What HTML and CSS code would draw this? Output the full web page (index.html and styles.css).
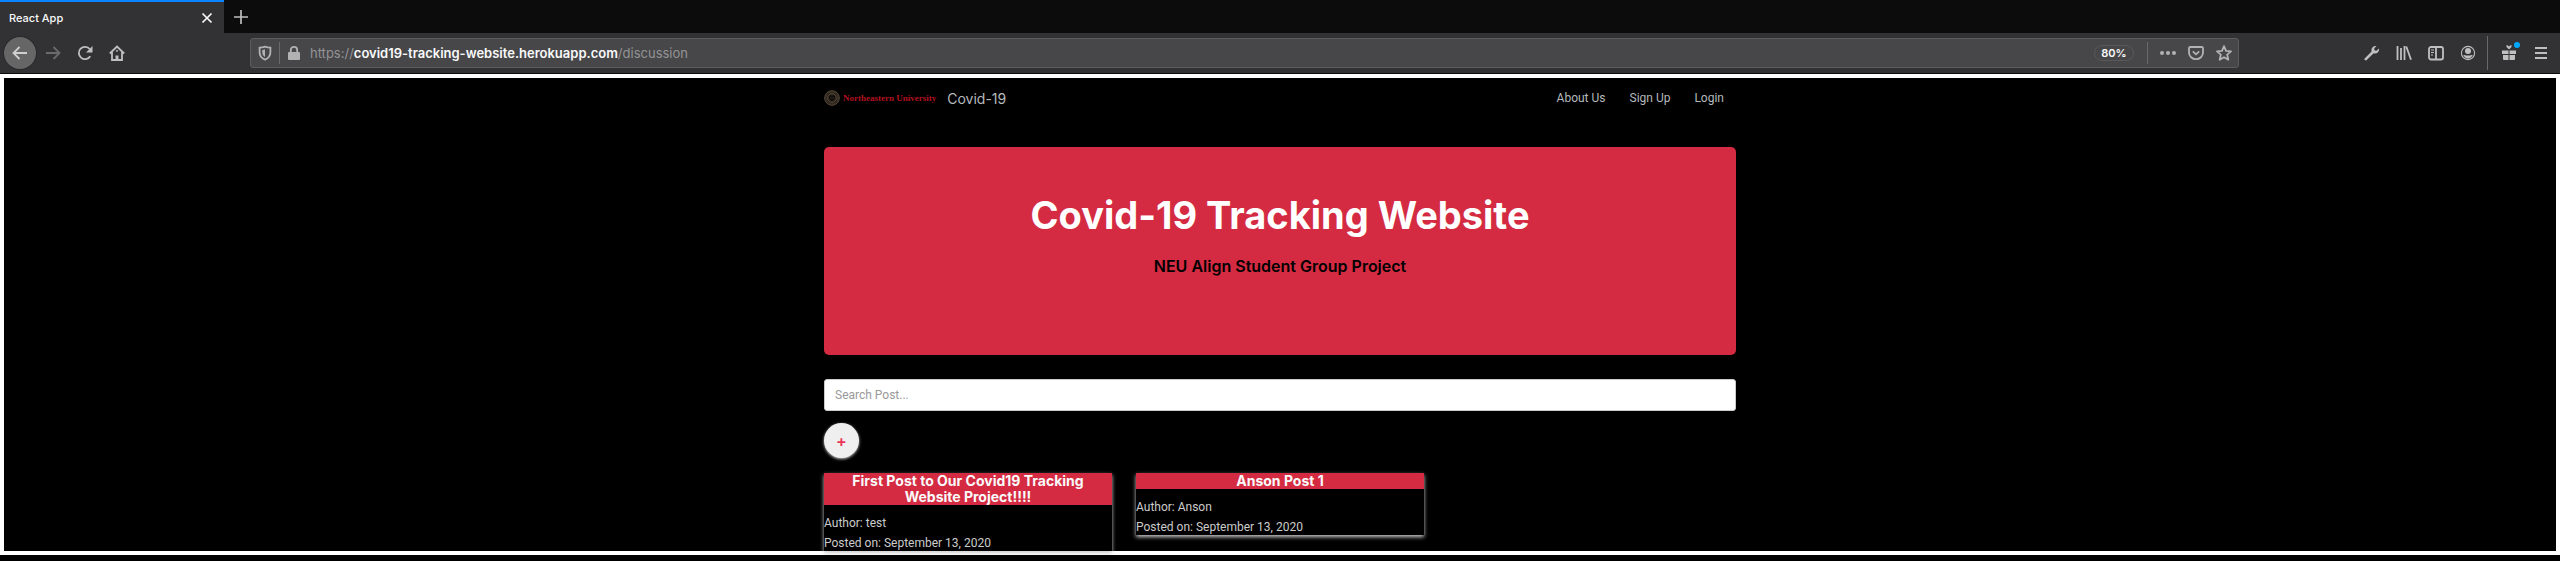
FILE: index.html
```html
<!DOCTYPE html>
<html lang="en">
<head>
<meta charset="utf-8">
<title>React App</title>
<link rel="stylesheet" href="styles.css">
</head>
<body>
<header class="browser">
  <div class="tabs">
    <div class="tab">
      <span class="tab-title">React App</span>
      <button class="tab-close" aria-label="Close tab"><svg width="12" height="12" viewBox="0 0 12 12"><path d="M1.500 1.500l9 9M10.500 1.500l-9 9" fill="none" stroke="currentColor" stroke-width="1.700"/></svg></button>
    </div>
    <button class="tab-new" aria-label="New tab"><svg width="16" height="16" viewBox="0 0 16 16"><path d="M8 1v14M1 8h14" fill="none" stroke="currentColor" stroke-width="1.700"/></svg></button>
  </div>
  <div class="toolbar">
    <button class="tool tool-back" aria-label="Back"><svg class="icon" viewBox="0 0 16 16"><path d="M15 8H1.500M7.500 2L1.500 8l6 6" class="line"/></svg></button>
    <button class="tool tool-off" aria-label="Forward" disabled><svg class="icon" viewBox="0 0 16 16"><path d="M1 8h13.500M8.500 2l6 6-6 6" class="line"/></svg></button>
    <button class="tool" aria-label="Reload"><svg class="icon" viewBox="0 0 16 16"><path d="M13.300 11.300A6.200 6.200 0 1 1 12.800 4" class="line"/><path d="M15.500 1v6.500H9z" fill="currentColor"/></svg></button>
    <button class="tool" aria-label="Home"><svg class="icon" viewBox="0 0 16 16"><path d="M.8 8.500L8 1.500l7.200 7M3 7v8h10V7" class="line"/><path d="M6.500 15v-4.500h3V15z" fill="currentColor"/><path d="M7.200 5.800h1.600" class="line"/></svg></button>
    <div class="urlbar">
      <button class="site-button" aria-label="Tracking protection"><svg class="icon" viewBox="0 0 16 16"><path d="M8 1.600c2 .7 3.700 1 5.400 1v4.600c0 3.600-2 6-5.400 7.400-3.400-1.400-5.400-3.800-5.400-7.400V2.600c1.700 0 3.400-.3 5.400-1z" class="line"/><path d="M8 4.300v7.600C6.200 10.800 5.300 9.400 5.300 7.300V4.900C6.300 4.800 7.200 4.600 8 4.300z" fill="currentColor"/></svg></button>
      <span class="rule"></span>
      <button class="site-button" aria-label="Secure connection"><svg class="icon" viewBox="0 0 16 16"><rect x="2" y="7" width="12" height="8" rx="1" fill="currentColor"/><path d="M4.800 8V5a3.200 3.200 0 0 1 6.400 0v3" class="line"/></svg></button>
      <div class="address">https://<span class="domain">covid19-tracking-website.herokuapp.com</span>/discussion</div>
      <button class="zoom-level">80%</button>
      <span class="rule"></span>
      <div class="page-actions">
        <button class="action" aria-label="Page actions"><svg class="icon" viewBox="0 0 16 16" fill="currentColor"><circle cx="2" cy="8" r="2"/><circle cx="8" cy="8" r="2"/><circle cx="14" cy="8" r="2"/></svg></button>
        <button class="action" aria-label="Save to Pocket"><svg class="icon" viewBox="0 0 16 16"><path d="M2.300 2h11.400q1.300 0 1.300 1.300V7.500a7 6.700 0 0 1-14 0V3.300Q1 2 2.300 2z" class="line"/><path d="M4.800 6.300L8 9.300l3.200-3" class="line"/></svg></button>
        <button class="action" aria-label="Bookmark"><svg class="icon" viewBox="0 0 16 16"><path d="M8 1.200l2 4.600 5 .5-3.800 3.400 1.100 5L8 12.200l-4.300 2.500 1.100-5L1 6.300l5-.5z" class="line" stroke-linejoin="round"/></svg></button>
      </div>
    </div>
    <button class="tool" aria-label="Developer tools"><svg class="icon" viewBox="0 0 16 16"><path d="M1.800 14.200L9.500 6.500" fill="none" stroke="currentColor" stroke-width="2.600" stroke-linecap="round"/><path d="M12.500 1A4.200 4.200 0 0 0 7.600 6.200L9.800 8.400A4.200 4.200 0 0 0 15 3.500l-2.500 2.300-2-.3-.3-2z" fill="currentColor"/></svg></button>
    <button class="tool" aria-label="Library"><svg class="icon" viewBox="0 0 16 16"><path d="M1.500 1v14M5 3v12M8.500 1v14M10.300 1.500L15 14.700" class="line"/></svg></button>
    <button class="tool" aria-label="Sidebars"><svg class="icon" viewBox="0 0 16 16"><rect x="1" y="2" width="14" height="12.500" rx="2" class="line"/><path d="M8 2v12" class="line"/><path d="M3 5h3M3 7.500h3M3 10h2" fill="none" stroke="currentColor"/></svg></button>
    <button class="tool" aria-label="Account"><svg class="icon" viewBox="0 0 16 16"><circle cx="8" cy="8" r="6.600" fill="none" stroke="currentColor" stroke-width="1.100"/><circle cx="8" cy="6" r="3" fill="currentColor"/><path d="M3.300 10c1.200 0 2 .5 4.700.5s3.500-.5 4.700-.5c-.7 2-2.500 3.400-4.700 3.400S4 12 3.300 10z" fill="currentColor"/></svg></button>
    <span class="rule rule-tall"></span>
    <button class="tool tool-gift" aria-label="What's new"><svg class="icon" viewBox="0 0 16 16" fill="currentColor"><path d="M1 5.500h6.500V9H1zM8.500 5.500H15V9H8.500zM2 10h5.500v5H3q-1 0-1-1zM8.500 10H14v4q0 1-1 1H8.500z"/><path d="M5.500 0Q7 0 8 1.500 9 0 10.500 0v2L8 4.500 5.500 2z"/></svg><span class="dot"></span></button>
    <button class="tool" aria-label="Menu"><svg class="icon" viewBox="0 0 16 16"><path d="M2 3h12M2 8h12M2 13h12" class="line"/></svg></button>
  </div>
</header>
<div class="frame">
  <div class="container">
    <nav class="navbar">
      <a class="logo" href="#"><svg width="16" height="16" viewBox="0 0 16 16" fill="none" stroke="#5a4c3c"><circle cx="8" cy="8" r="7.300" fill="#241e17"/><circle cx="8" cy="8" r="6" stroke-dasharray="1 1"/><circle cx="8" cy="8" r="4.300"/><path d="M5.500 6h5v2.500L8 10.800 5.500 8.500zM8 6v4" stroke="#0c0a08"/></svg><span class="logo-text">Northeastern University</span></a>
      <a class="brand" href="#">Covid-19</a>
      <div class="links"><a href="#">About Us</a><a href="#">Sign Up</a><a href="#">Login</a></div>
    </nav>
    <main>
      <section class="hero">
        <h1>Covid-19 Tracking Website</h1>
        <p>NEU Align Student Group Project</p>
      </section>
      <input class="search" type="text" placeholder="Search Post..." aria-label="Search Post">
      <button class="add" aria-label="Add post">+</button>
      <div class="posts">
        <article class="post">
          <h2>First Post to Our Covid19 Tracking Website Project!!!!</h2>
          <div class="post-body"><p>Author: test</p><p>Posted on: September 13, 2020</p></div>
        </article>
        <article class="post">
          <h2>Anson Post 1</h2>
          <div class="post-body"><p>Author: Anson</p><p>Posted on: September 13, 2020</p></div>
        </article>
      </div>
    </main>
  </div>
</div>
</body>
</html>
```
FILE: styles.css
```css
* { box-sizing: border-box; }
body { margin: 0; background: #000; font-family: Inter, "Liberation Sans", sans-serif; font-size: 11px; }
h1, h2, p { margin: 0; }
a { color: inherit; text-decoration: none; }
button { font: inherit; color: inherit; background: none; border: 0; padding: 0; display: flex; align-items: center; justify-content: center; }
.icon { width: 16px; height: 16px; display: block; }
.line { fill: none; stroke: currentColor; stroke-width: 1.800; }

.tabs { display: flex; height: 33px; background: #0c0c0d; }
.tab { width: 224px; display: flex; align-items: center; justify-content: space-between; padding: 0 11px 0 9px; border-top: 2px solid #0a84ff; background: #323234; color: #f9f9fa; font-weight: 500; }
.tab-new { width: 34px; color: #bebebe; }
.toolbar { display: flex; align-items: center; height: 41px; padding: 0 3px 0 4px; background: #323234; border-bottom: 1px solid #0c0c0d; color: #bfbfc0; }
.tool { width: 32px; height: 32px; flex: none; position: relative; }
.tool-back { margin-right: 1px; border-radius: 50%; background: #666667; color: #d0d0d0; box-shadow: 0 0 0 1px #29292a; }
.tool-off { color: #6b6b6d; }
.rule { width: 1px; height: 22px; background: #69696b; }
.rule-tall { height: 34px; margin: 0 5px 0 3px; }
.dot { position: absolute; top: 5px; right: 5px; width: 6px; height: 6px; border-radius: 50%; background: #00a8ff; }
.urlbar { flex: 1; display: flex; align-items: center; height: 30px; margin: 0 117px; border: 1px solid #5c5c5e; border-radius: 3px; background: #474749; color: #b2b2b3; }
.site-button { width: 28px; height: 28px; }
.address { flex: 1; padding-left: 2px; color: #949496; font-size: 13px; white-space: nowrap; }
.domain { color: #f9f9fa; font-weight: 600; }
.zoom-level { width: 40px; height: 16px; margin-right: 13px; border: 1px solid #58585a; border-radius: 8px; color: #f9f9fa; font-weight: 600; }
.page-actions { display: flex; padding-left: 6px; }
.action { width: 28px; height: 28px; }

.frame { border: 4px solid #fff; background: #000; font-size: 12px; }
.container { max-width: 912px; margin: 0 auto; }
.navbar { display: flex; align-items: center; height: 40px; color: #b5b9bd; }
.logo { display: flex; align-items: center; gap: 3px; }
.logo-text { color: #b0101f; font-family: "Liberation Serif", serif; font-size: 9px; font-weight: 700; }
.brand { margin-left: 11px; font-size: 14px; }
.links { display: flex; gap: 24px; margin-left: auto; padding-right: 12px; font-family: Roboto, sans-serif; }
.hero { height: 208px; margin-top: 29px; padding-top: 44px; border-radius: 5px; background: #d42b42; text-align: center; }
.hero h1 { color: #fff; font-size: 38px; font-weight: 700; line-height: 48px; }
.hero p { margin-top: 15px; font-size: 16px; font-weight: 600; line-height: 24px; }
.search { display: block; width: 100%; height: 32px; margin-top: 24px; padding: 0 10px; border: 1px solid #ccc; border-radius: 3px; background: #fff; font-family: Roboto, sans-serif; font-size: 12px; color: #333; }
.search::placeholder { color: #999; opacity: 1; }
.add { width: 35px; height: 35px; margin: 12px 0 15px; border-radius: 50%; background: #efefef; color: #eb3455; font-size: 16px; font-weight: 600; box-shadow: 0 1px 3px #ccc; }
.posts { display: flex; align-items: flex-start; gap: 24px; }
.post { width: 288px; background: #000; color: #ccc; box-shadow: 0 2px 4px #ccc; }
.post h2 { padding: 0 16px; background: #d42b42; color: #fafafa; font-size: 14px; font-weight: 700; line-height: 16px; text-align: center; }
.post-body { display: grid; gap: 4px; padding-top: 10px; font-family: Roboto, sans-serif; line-height: 16px; }
```
